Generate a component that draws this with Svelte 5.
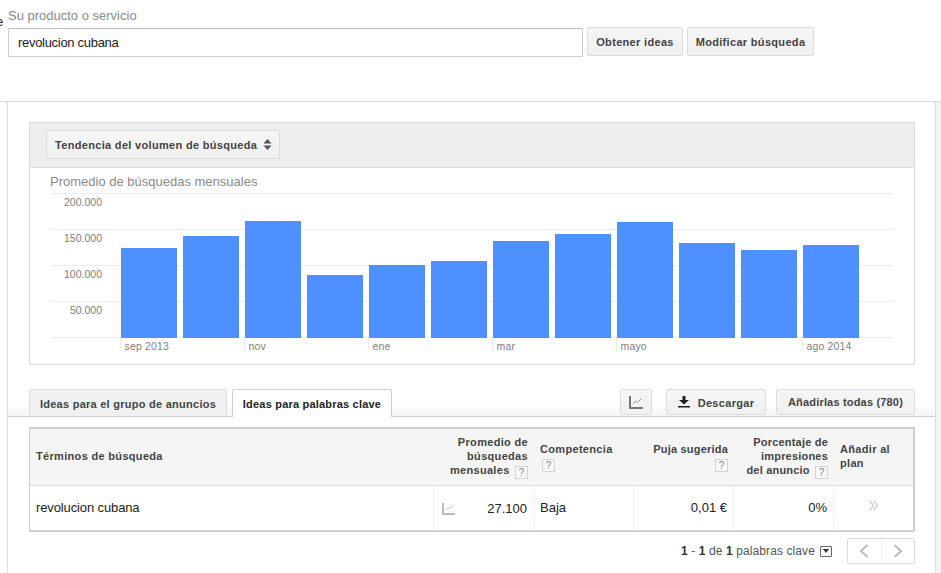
<script>
  const bars = [248, 236, 221, 275, 265, 261, 241, 234, 222, 243, 250, 245];
  const grid = [193, 229, 265, 301, 337];
  const yLabels = [["200.000", 206], ["150.000", 242], ["100.000", 278], ["50.000", 314]];
  const xLabels = [["sep 2013", 120], ["nov", 244], ["ene", 368], ["mar", 492], ["mayo", 616], ["ago 2014", 802]];
</script>

<div class="page">
  <header class="top">
    <span class="clip">e</span>
    <div class="field">
      <span class="label">Su producto o servicio</span>
      <div class="searchline">
        <div class="input">revolucion cubana</div>
        <button class="btn b1">Obtener ideas</button>
        <button class="btn b2">Modificar búsqueda</button>
      </div>
    </div>
  </header>

  <div class="shell">
    <main class="main">
      <section class="card">
        <div class="cardhead">
          <button class="btn select">Tendencia del volumen de búsqueda
            <svg width="9" height="13" viewBox="0 0 9 13"><path d="M4.5 1 8.5 5.500H.5zM4.500 12 .5 7.500h8z" fill="#555"/></svg>
          </button>
        </div>
        <svg class="chart" width="884" height="196" viewBox="30 168 884 196">
          <text x="50" y="186" class="ctitle">Promedio de búsquedas mensuales</text>
          {#each grid as y}
            <rect x="50" y={y} width="844" height="1" fill="#ececec" />
          {/each}
          {#each bars as top, i}
            <rect x={121 + i * 62} y={top} width="56" height={338 - top} fill="#4d90fe" />
          {/each}
          {#each yLabels as [t, y]}
            <text x="102" y={y} text-anchor="end" class="axis">{t}</text>
          {/each}
          {#each xLabels as [t, x]}
            <rect x={x} y="338" width="1" height="13" fill="#ececec" />
            <text x={x + 4.500} y="350" class="axis xa">{t}</text>
          {/each}
        </svg>
      </section>

      <div class="tabbar">
        <div class="tab">Ideas para el grupo de anuncios</div>
        <div class="tab active">Ideas para palabras clave</div>
        <div class="spacer"></div>
        <button class="btn tool chartbtn" aria-label="Gráfico">
          <svg width="14" height="13" viewBox="0 0 14 13"><path d="M1 0v12h13" fill="none" stroke="#777" stroke-width="2"/><path d="M4 8 6.500 5l2 1.500 4-4" fill="none" stroke="#999" stroke-width="1"/></svg>
        </button>
        <button class="btn tool dl">
          <svg width="12" height="12" viewBox="0 0 12 12"><path d="M4.500 0h3v4H11L6 8.500 1 4h3.500z" fill="#222"/><rect x="0" y="10" width="12" height="1.500" fill="#222"/></svg>
          <span class="dltext">Descargar</span>
        </button>
        <button class="btn tool addall">Añadirlas todas (780)</button>
      </div>

      <div class="table">
        <div class="th terms">Términos de búsqueda</div>
        <div class="th right avg">Promedio de<br />búsquedas<br />mensuales <i class="help">?</i></div>
        <div class="th mid">Competencia<br /><i class="help">?</i></div>
        <div class="th right mid">Puja sugerida<br /><i class="help">?</i></div>
        <div class="th right">Porcentaje de<br />impresiones<br />del anuncio <i class="help">?</i></div>
        <div class="th last mid">Añadir al<br />plan</div>

        <div class="td first">revolucion cubana</div>
        <div class="td num">
          <svg width="13" height="12" viewBox="0 0 13 12"><path d="M1 0v11h12" fill="none" stroke="#bbb" stroke-width="2"/><path d="M4 7.500 6 4.500l2 1.500 3-4" fill="none" stroke="#ccc"/></svg>
          <span>27.100</span>
        </div>
        <div class="td">Baja</div>
        <div class="td rt">0,01 €</div>
        <div class="td rt">0%</div>
        <div class="td add">
          <svg width="10" height="11" viewBox="0 0 10 11"><path d="M1 1l3.500 4.500L1 10M5 1l3.500 4.500L5 10" fill="none" stroke="#ccc" stroke-width="1.300"/></svg>
        </div>
      </div>

      <div class="pagerow">
        <span class="count"><b>1</b> - <b>1</b> de <b>1</b> palabras clave</span>
        <span class="pagesize"><i></i></span>
        <div class="pager">
          <span class="pg"><svg width="10" height="14" viewBox="0 0 10 14"><path d="M8.500 1 2 7l6.500 6" fill="none" stroke="#bbb" stroke-width="2"/></svg></span>
          <span class="pg"><svg width="10" height="14" viewBox="0 0 10 14"><path d="M1.500 1 8 7l-6.500 6" fill="none" stroke="#bbb" stroke-width="2"/></svg></span>
        </div>
      </div>
    </main>
    <div class="strip"></div>
  </div>
</div>

<style>
  :global(body) {
    margin: 0;
    background: #fff;
    overflow: hidden;
  }
  .page {
    width: 941px;
    height: 573px;
    overflow: hidden;
    font-family: "Liberation Sans", Arial, sans-serif;
    font-size: 12px;
    color: #222;
    position: relative;
  }
  button {
    font-family: inherit;
  }
  .top {
    height: 102px;
    box-sizing: border-box;
    border-bottom: 1px solid #dcdcdc;
    padding: 8px 0 0 8px;
    width: 941px;
    position: relative;
  }
  .clip {
    position: absolute;
    left: -4px;
    top: 14px;
    font-size: 13px;
    color: #222;
  }
  .label {
    display: block;
    font-size: 13px;
    line-height: 15px;
    color: #8a8a8a;
    margin-bottom: 5px;
  }
  .searchline {
    display: flex;
    align-items: flex-start;
  }
  .input {
    width: 575px;
    height: 29px;
    box-sizing: border-box;
    border: 1px solid #d0d0d0;
    border-top-color: #bdbdbd;
    padding-left: 9px;
    line-height: 28px;
    font-size: 13px;
    letter-spacing: -0.3px;
  }
  .btn {
    box-sizing: border-box;
    border: 1px solid #dcdcdc;
    border-radius: 2px;
    background: linear-gradient(#f6f6f6, #f0f0f0);
    font-size: 11px;
    font-weight: bold;
    letter-spacing: 0.32px;
    color: #444;
    padding: 0;
    margin: 0;
    white-space: nowrap;
  }
  .b1 {
    width: 96px;
    height: 29px;
    margin: -1px 0 0 4px;
  }
  .b2 {
    width: 127px;
    height: 29px;
    margin: -1px 0 0 4px;
  }
  .shell {
    display: flex;
    height: 471px;
  }
  .main {
    box-sizing: border-box;
    width: 929px;
    height: 471px;
    margin-left: 7px;
    border-left: 1px solid #dcdcdc;
    border-right: 1px solid #dcdcdc;
    padding-top: 20px;
  }
  .strip {
    flex: 1;
    background: #f3f3f3;
  }
  .card {
    box-sizing: border-box;
    width: 886px;
    height: 243px;
    margin-left: 21px;
    border: 1px solid #dcdcdc;
  }
  .cardhead {
    box-sizing: border-box;
    height: 45px;
    background: #eee;
    border-bottom: 1px solid #dcdcdc;
    padding: 7px 0 0 16px;
  }
  .select {
    width: 234px;
    height: 29px;
    display: flex;
    align-items: center;
    justify-content: space-between;
    padding: 0 7px 0 8px;
    color: #444;
  }
  .chart {
    display: block;
  }
  .ctitle {
    font-size: 13px;
    fill: #8a8a8a;
  }
  .axis {
    font-size: 10.500px;
    fill: #808080;
  }
  .xa {
    letter-spacing: 0.15px;
  }
  .tabbar {
    display: flex;
    align-items: flex-start;
    height: 28px;
    box-sizing: border-box;
    margin: 24px 0 0 0;
    padding-left: 21px;
    border-bottom: 1px solid #d0d0d0;
    background: linear-gradient(#fff 0, #fff 14px, #f5f5f5 100%);
    width: 927px;
  }
  .tab {
    box-sizing: border-box;
    height: 27px;
    width: 198px;
    border: 1px solid #dcdcdc;
    border-bottom: none;
    border-radius: 2px 2px 0 0;
    background: #f1f1f1;
    font-size: 11px;
    font-weight: bold;
    letter-spacing: 0.26px;
    color: #444;
    text-align: center;
    line-height: 29px;
  }
  .tab.active {
    width: 160px;
    height: 28px;
    margin-left: 5px;
    background: #fff;
    color: #222;
    border-color: #cfcfcf;
    position: relative;
    letter-spacing: 0.2px;
  }
  .spacer {
    flex: 1;
  }
  .tool {
    height: 26px;
  }
  .chartbtn {
    width: 32px;
    display: flex;
    align-items: center;
    justify-content: center;
  }
  .dl {
    width: 100px;
    margin-left: 14px;
    display: flex;
    align-items: center;
    justify-content: center;
    gap: 8px;
  }
  .dltext {
    padding-top: 2px;
  }
  .addall {
    width: 139px;
    margin: 0 20px 0 10px;
    letter-spacing: 0.18px;
  }
  .table {
    box-sizing: border-box;
    width: 886px;
    height: 105px;
    margin: 10px 0 0 21px;
    border: 2px solid #cfcfcf;
    border-width: 2px 2px 2px 1px;
    display: grid;
    grid-template-columns: 403px 101px 99px 100px 100px 80px;
    grid-template-rows: 57px 45px;
  }
  .th {
    background: #f5f5f5;
    border-bottom: 1px solid #dcdcdc;
    font-size: 11px;
    font-weight: bold;
    letter-spacing: 0.32px;
    line-height: 14px;
    color: #444;
    padding: 6px 6px 0;
    box-sizing: border-box;
  }
  .th.terms {
    padding-top: 20px;
  }
  .th.mid {
    padding-top: 13px;
  }
  .th.right {
    text-align: right;
    padding-right: 5px;
    letter-spacing: 0.2px;
  }
  .th.right.avg {
    padding-right: 6px;
    letter-spacing: 0.32px;
  }
  .th.last {
    padding-left: 7px;
  }
  .help {
    display: inline-block;
    box-sizing: border-box;
    width: 13px;
    height: 13px;
    border: 1px solid #d4d4d4;
    background: #f8f8f8;
    font: normal 10px/11px "Liberation Sans", sans-serif;
    text-align: center;
    color: #888;
    vertical-align: -2px;
    letter-spacing: 0;
    margin-left: 2px;
  }
  .td {
    border-left: 1px solid #f0f0f0;
    padding: 0 6px 0 5px;
    line-height: 44px;
    font-size: 13px;
    color: #222;
    box-sizing: border-box;
  }
  .td.first {
    border-left: none;
    padding-left: 6px;
    letter-spacing: -0.12px;
  }
  .rt {
    text-align: right;
  }
  .num {
    display: flex;
    justify-content: space-between;
    align-items: center;
    padding-left: 8px;
    padding-right: 7px;
  }
  .add {
    display: flex;
    justify-content: center;
    align-items: center;
    padding: 0 0 6px;
  }
  .pagerow {
    display: flex;
    align-items: center;
    justify-content: flex-end;
    height: 26px;
    width: 907px;
    margin-top: 6px;
    box-sizing: border-box;
  }
  .count {
    font-size: 12px;
    letter-spacing: 0.1px;
    color: #555;
    margin-right: 5px;
  }
  .count b {
    color: #333;
  }
  .pagesize {
    box-sizing: border-box;
    width: 12px;
    height: 11px;
    border: 1px solid #666;
    border-radius: 1px;
    margin-right: 15px;
    display: flex;
    align-items: center;
    justify-content: center;
  }
  .pagesize i {
    width: 0;
    height: 0;
    border: 3px solid transparent;
    border-top: 4px solid #333;
    border-bottom: none;
  }
  .pager {
    display: flex;
    width: 68px;
    height: 26px;
    box-sizing: border-box;
    border: 1px solid #dcdcdc;
    border-radius: 2px;
  }
  .pg {
    flex: 1;
    display: flex;
    align-items: center;
    justify-content: center;
  }
  .pg + .pg {
    border-left: 1px solid #eee;
  }
</style>
